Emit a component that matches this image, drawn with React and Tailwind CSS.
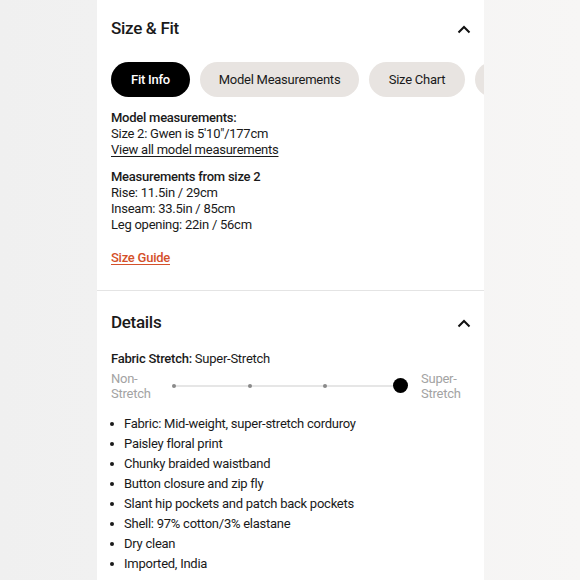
import React from "react";

function Chevron() {
  return (
    <svg width="14" height="9" viewBox="0 0 14 9" fill="none">
      <path d="M1.5 7.5L7 2L12.5 7.5" stroke="#111" strokeWidth="2" />
    </svg>
  );
}

export default function App() {
  const bullets = [
    "Fabric: Mid-weight, super-stretch corduroy",
    "Paisley floral print",
    "Chunky braided waistband",
    "Button closure and zip fly",
    "Slant hip pockets and patch back pockets",
    "Shell: 97% cotton/3% elastane",
    "Dry clean",
    "Imported, India",
  ];
  return (
    <div
      className="w-[580px] h-[580px] overflow-hidden flex bg-gradient-to-r from-[#f0f0f0] via-[#f3f3f3] to-[#f7f6f5] text-[#1a1a1a] tracking-[-0.25px]"
      style={{ fontFamily: "Roboto, 'Liberation Sans', sans-serif" }}
    >
      <div className="ml-[97px] w-[387px] h-full bg-white overflow-hidden shrink-0">
        {/* Size & Fit */}
        <div className="pt-[18px] pb-[24px] border-b border-[#e4e4e4]">
          <div className="flex items-center justify-between h-[22px] pl-[14px] pr-[13px]">
            <h2 className="text-[17px] font-medium tracking-[-0.3px]">Size &amp; Fit</h2>
            <Chevron />
          </div>
          <div className="mt-[22px] flex gap-[10px] pl-[14px] overflow-hidden">
            <div className="h-[35px] w-[79px] shrink-0 rounded-full bg-black text-white text-[13px] font-medium flex items-center justify-center">
              Fit Info
            </div>
            <div className="h-[35px] w-[159px] shrink-0 rounded-full bg-[#e8e4e1] text-[13px] flex items-center justify-center">
              Model Measurements
            </div>
            <div className="h-[35px] w-[96px] shrink-0 rounded-full bg-[#e8e4e1] text-[13px] flex items-center justify-center">
              Size Chart
            </div>
            <div className="h-[35px] w-[96px] shrink-0 rounded-full bg-[#e8e4e1]" />
          </div>
          <div className="mt-[13px] pl-[14px] text-[13px] leading-[16px]">
            <div className="font-medium">Model measurements:</div>
            <div>Size 2: Gwen is 5'10"/177cm</div>
            <div className="underline underline-offset-2">View all model measurements</div>
          </div>
          <div className="mt-[11px] pl-[14px] text-[13px] leading-[16px]">
            <div className="font-medium">Measurements from size 2</div>
            <div>Rise: 11.5in / 29cm</div>
            <div>Inseam: 33.5in / 85cm</div>
            <div>Leg opening: 22in / 56cm</div>
          </div>
          <div className="mt-[17px] pl-[14px] text-[13px] leading-[16px] font-medium text-[#d4502a] underline underline-offset-2">
            Size Guide
          </div>
        </div>

        {/* Details */}
        <div className="pt-[21px]">
          <div className="flex items-center justify-between h-[22px] pl-[14px] pr-[13px]">
            <h2 className="text-[17px] font-medium tracking-[-0.3px]">Details</h2>
            <Chevron />
          </div>
          <div className="mt-[17px] pl-[14px] text-[13px] leading-[16px]">
            <span className="font-medium">Fabric Stretch:</span> Super-Stretch
          </div>
          <div className="mt-[4px] pl-[14px] flex items-center text-[13px] leading-[15px] text-[#a3a3a3]">
            <div className="w-[61px]">
              Non-
              <br />
              Stretch
            </div>
            <div className="relative w-[236px] h-[30px]">
              <div className="absolute left-[2px] right-[8px] top-[14px] h-[2px] bg-[#e6e6e6]" />
              <div className="absolute left-[0px] top-[13px] w-[4px] h-[4px] rounded-full bg-[#8a8a8a]" />
              <div className="absolute left-[76px] top-[13px] w-[4px] h-[4px] rounded-full bg-[#8a8a8a]" />
              <div className="absolute left-[151px] top-[13px] w-[4px] h-[4px] rounded-full bg-[#8a8a8a]" />
              <div className="absolute left-[221px] top-[7px] w-[15px] h-[15px] rounded-full bg-black" />
            </div>
            <div className="ml-[13px]">
              Super-
              <br />
              Stretch
            </div>
          </div>
          <ul className="mt-[13px] pl-[14px] text-[13px] leading-[20px]">
            {bullets.map((b) => (
              <li key={b} className="flex items-center">
                <span className="w-[4px] h-[4px] rounded-full bg-[#1a1a1a] ml-[-1px] mr-[10px]" />
                <span>{b}</span>
              </li>
            ))}
          </ul>
        </div>
      </div>
    </div>
  );
}
